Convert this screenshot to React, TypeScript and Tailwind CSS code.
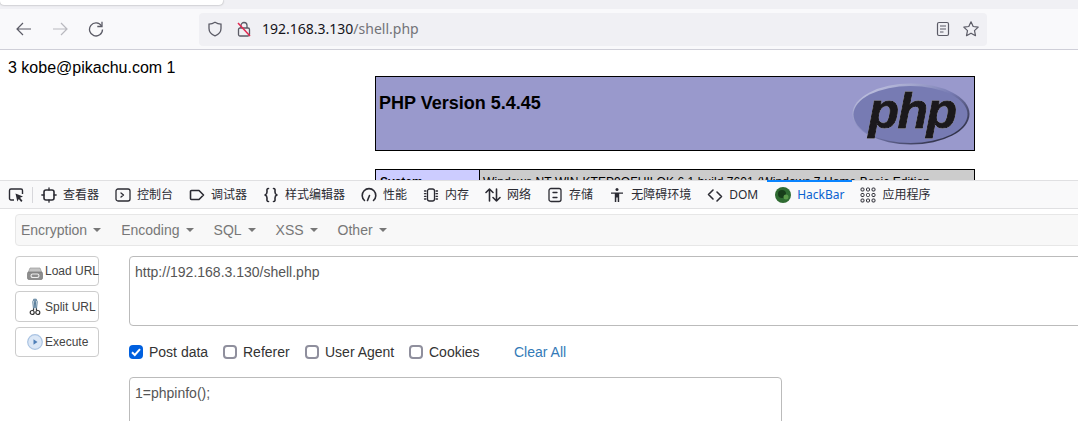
import type { ReactNode } from 'react'

const cjk = 'font-["Noto_Sans","Noto_Sans_CJK_SC",sans-serif]'

function ToolIcon({ children }: { children: ReactNode }) {
  return (
    <svg viewBox="0 0 16 16" fill="none" stroke="#2b2b33" strokeWidth="1.3" strokeLinecap="round" strokeLinejoin="round" className="h-4 w-4 shrink-0">
      {children}
    </svg>
  )
}

const tools: { label: string; icon: ReactNode }[] = [
  {
    label: '查看器',
    icon: (
      <>
        <rect x="3" y="3" width="10" height="10" rx="2" strokeWidth="1.6" />
        <path d="M8 .8V3M8 13v2.2M.8 8H3M13 8h2.2" />
      </>
    ),
  },
  {
    label: '控制台',
    icon: (
      <>
        <rect x="1" y="2" width="14" height="12" rx="2" />
        <path d="M6 6l2.5 2L6 10" />
      </>
    ),
  },
  {
    label: '调试器',
    icon: <path d="M2.5 3.5h7.5L14.5 8 10 12.5H2.5a1 1 0 0 1-1-1v-7a1 1 0 0 1 1-1z" strokeWidth="1.6" />,
  },
  {
    label: '样式编辑器',
    icon: (
      <path
        d="M5.5 1.5C3.5 1.5 4 3 4 5S3.8 7.4 2 8c1.800.6 2 1 2 3s-.5 3.500 1.500 3.500M10.500 1.500c2 0 1.500 1.500 1.500 3.500s.2 2.400 2 3c-1.800.6-2 1-2 3s.5 3.500-1.500 3.500"
        strokeWidth="1.6"
      />
    ),
  },
  {
    label: '性能',
    icon: (
      <>
        <path d="M3.500 13.500A6.800 6.800 0 1 1 12.500 13.500" strokeWidth="1.600" />
        <path d="M6.500 13.500L8.500 8.500" strokeWidth="1.600" />
      </>
    ),
  },
  {
    label: '内存',
    icon: (
      <>
        <rect x="4.500" y="2" width="7" height="12" rx="2" />
        <path d="M1.500 4h1.500M1.500 6.700h1.500M1.500 9.300h1.500M1.500 12h1.500M13 4h1.500M13 6.700h1.500M13 9.300h1.500M13 12h1.500" />
      </>
    ),
  },
  {
    label: '网络',
    icon: <path d="M4.500 14V2M1 5.500L4.500 2 8 5.500M11.500 2v12M8 10.500L11.500 14 15 10.500" strokeWidth="1.600" />,
  },
  {
    label: '存储',
    icon: (
      <>
        <rect x="2" y="1.500" width="12" height="13" rx="2" />
        <path d="M6 5.500h4M6 10.500h4" />
      </>
    ),
  },
  {
    label: '无障碍环境',
    icon: (
      <>
        <circle cx="8" cy="2.500" r="1.500" fill="#2b2b33" stroke="none" />
        <path d="M2 5.500h12v1.300H10.200V15H8.700v-4.500H7.300V15H5.800V6.800H2z" fill="#2b2b33" stroke="none" />
      </>
    ),
  },
  {
    label: 'DOM',
    icon: <path d="M6 3L1.500 7.500 6 12M10 5l4.500 4.500L10 14" strokeWidth="1.600" />,
  },
]

function PhpLogo() {
  return (
    <svg viewBox="0 0 118 62" className="h-[62px] w-[118px]">
      <defs>
        <linearGradient id="rim" x1="0" y1="0" x2="1" y2="1">
          <stop offset="0" stopColor="#d4d6ec" />
          <stop offset="0.5" stopColor="#777bb3" />
          <stop offset="1" stopColor="#14141c" />
        </linearGradient>
      </defs>
      <ellipse cx="59" cy="31" rx="58.500" ry="30.500" fill="url(#rim)" />
      <ellipse cx="58.500" cy="31.500" rx="57" ry="28.500" fill="#777bb3" />
      <text
        x="60"
        y="45"
        textAnchor="middle"
        fontFamily="Liberation Sans, sans-serif"
        fontSize="50"
        fontWeight="700"
        fontStyle="italic"
        letterSpacing="-1.500"
        fill="#1b191c"
        stroke="#1b191c"
        strokeWidth="1"
        className="drop-shadow-[0_0_0.7px_#ffffff]"
      >
        php
      </text>
    </svg>
  )
}

function LoadIcon() {
  return (
    <svg viewBox="0 0 16 16" className="h-4 w-4 shrink-0">
      <path d="M3 3h10l2 5H1z" fill="#c4c4c4" stroke="#9a9a9a" strokeWidth="0.700" />
      <rect x="0.500" y="7" width="15" height="7.500" rx="1.500" fill="#8d8d8d" stroke="#777" strokeWidth="0.700" />
      <rect x="4" y="9" width="8" height="3.500" rx="1.700" fill="none" stroke="#eeeeee" strokeWidth="1.100" />
    </svg>
  )
}

function ScissorsIcon() {
  return (
    <svg viewBox="0 0 12 18" fill="none" className="h-[18px] w-3 shrink-0">
      <path d="M4.500 11L3.800 3.500 5.200.8 5.800 10M7.500 11L8.200 3.500 6.800.8 6.200 10" stroke="#5a7f9c" strokeWidth="1" />
      <circle cx="3.200" cy="14.500" r="2" stroke="#333" strokeWidth="1.200" />
      <circle cx="8.800" cy="14.500" r="2" stroke="#333" strokeWidth="1.200" />
      <path d="M4 12.700L5 10.500M8 12.700L7 10.500" stroke="#333" strokeWidth="1.200" />
    </svg>
  )
}

function PlayIcon() {
  return (
    <svg viewBox="0 0 16 16" className="h-4 w-4 shrink-0">
      <circle cx="8" cy="8" r="7.300" fill="#dbe7f6" stroke="#a9c3e2" strokeWidth="1.200" />
      <path d="M6.500 5.200L10.500 8l-4 2.800z" fill="#4f7fb8" />
    </svg>
  )
}

function SideButton({ icon, label, height, iconBox }: { icon: ReactNode; label: string; height: string; iconBox: string }) {
  return (
    <button type="button" className={`flex w-[84px] items-center rounded border border-[#cccccc] bg-white pl-[9px] text-left ${height}`}>
      <span className={`flex w-5 shrink-0 justify-center ${iconBox}`}>{icon}</span>
      <span className="whitespace-nowrap text-xs text-[#444444]">{label}</span>
    </button>
  )
}

function Check({ label, checked, className }: { label: string; checked?: boolean; className: string }) {
  return (
    <label className={`flex items-center gap-[6px] text-sm text-[#333333] ${className}`}>
      {checked ? (
        <span className="flex h-[14px] w-[14px] items-center justify-center rounded-sm bg-[#0060df]">
          <svg viewBox="0 0 14 14" fill="none" stroke="#fff" strokeWidth="2" className="h-[14px] w-[14px]">
            <path d="M3 7.200L5.800 10 11 4.200" />
          </svg>
        </span>
      ) : (
        <span className="h-[14px] w-[14px] rounded-sm border-2 border-[#8f8f9d] bg-white" />
      )}
      {label}
    </label>
  )
}

export default function App() {
  return (
    <div className='flex h-[421px] w-[1078px] flex-col overflow-hidden bg-white font-["Liberation_Sans",sans-serif]'>
      {/* browser tab strip */}
      <div className="h-[9px] shrink-0 bg-[#f0f0f4]">
        <div className="h-[5px] w-[223px] rounded-b bg-white shadow-[0_0_2px_rgba(0,0,0,0.4)]" />
      </div>

      {/* nav bar */}
      <div className="flex h-[41px] shrink-0 items-center border-b border-[#cfcfd8] bg-[#f9f9fb] pl-[6px]">
        <div className="flex w-9 justify-center">
          <svg viewBox="0 0 16 16" fill="none" stroke="#5b5b66" strokeWidth="1.200" className="h-4 w-4">
            <path d="M15 8H1M7 2L1 8l6 6" />
          </svg>
        </div>
        <div className="flex w-9 justify-center">
          <svg viewBox="0 0 16 16" fill="none" stroke="#b9b9bf" strokeWidth="1.200" className="h-4 w-4">
            <path d="M1 8h14M9 2l6 6-6 6" />
          </svg>
        </div>
        <div className="flex w-9 justify-center">
          <svg viewBox="0 0 16 16" fill="none" stroke="#5b5b66" strokeWidth="1.300" className="h-4 w-4">
            <path d="M13.500 5A6.500 6.500 0 1 0 14.500 8.500" />
            <path d="M14 .8V5.500H9.300" />
          </svg>
        </div>
        <div className={`ml-[85px] flex h-[33px] w-[788px] items-center rounded bg-[#f0f0f4] pl-[8px] pr-2 text-sm ${cjk}`}>
          <svg viewBox="0 0 16 16" fill="none" stroke="#5b5b66" strokeWidth="1.300" className="h-4 w-4 shrink-0">
            <path d="M8 1.200c2 1.200 4 1.800 6 2v4.300c0 3.500-2.500 6-6 7.300-3.500-1.300-6-3.800-6-7.300V3.200c2-.2 4-.8 6-2z" />
          </svg>
          <svg viewBox="0 0 16 16" fill="none" className="ml-[13px] h-4 w-4 shrink-0">
            <path d="M5 7V4.500a3 3 0 0 1 6 0V7" stroke="#5b5b66" strokeWidth="1.300" />
            <rect x="2.500" y="7" width="11" height="8" rx="1.500" stroke="#5b5b66" strokeWidth="1.300" />
            <path d="M2 2l12 13" stroke="#e22850" strokeWidth="1.500" />
          </svg>
          <span className="ml-[10px] whitespace-nowrap text-[#15141a]">
            192.168.3.130<span className="text-[#737378]">/shell.php</span>
          </span>
          <svg viewBox="0 0 16 16" fill="none" stroke="#5b5b66" strokeWidth="1.200" className="ml-auto h-4 w-4 shrink-0">
            <rect x="2.500" y="1.500" width="11" height="13" rx="1.500" />
            <path d="M5 5h6M5 8h6M5 11h3.500" />
          </svg>
          <svg viewBox="0 0 16 16" fill="none" stroke="#5b5b66" strokeWidth="1.200" strokeLinejoin="round" className="ml-3 h-4 w-4 shrink-0">
            <path d="M8 .8l2.200 4.700 5 .6-3.700 3.500 1 5.100L8 12.200l-4.500 2.500 1-5.100L.8 6.100l5-.6z" />
          </svg>
        </div>
      </div>

      {/* page */}
      <div className="h-[130px] shrink-0 overflow-hidden bg-white px-2 pt-[10px] text-black">
        <p className="text-base leading-4">3 kobe@pikachu.com 1</p>
        <div className="ml-[367px] flex h-[75px] w-[600px] justify-between border border-black bg-[#9999cc] pl-[3px] pr-[4px]">
          <h1 className="mt-[16px] text-lg font-bold leading-5">PHP Version 5.4.45</h1>
          <div className="mt-[6px]">
            <PhpLogo />
          </div>
        </div>
        <div className="ml-[367px] mt-[18px] flex h-[40px] w-[600px] border border-black text-xs">
          <div className="w-[104px] border-r border-black bg-[#ccccff] pl-[4px] pt-[4px] font-bold">System</div>
          <div className="flex-1 whitespace-nowrap bg-[#cccccc] pl-[3px] pt-[4px] tracking-[0.07px]">Windows NT WIN-KTEP9QFUILOK 6.1 build 7601 (Windows 7 Home Basic Edition</div>
        </div>
      </div>

      {/* devtools toolbar */}
      <div className={`flex h-[29px] shrink-0 items-center border-y border-[#e0e0e2] bg-[#f9f9fa] pl-2 text-xs text-[#2b2b33] ${cjk}`}>
        <svg viewBox="0 0 16 16" fill="none" stroke="#2b2b33" strokeWidth="1.400" className="h-4 w-4 shrink-0">
          <path d="M6 13H3a1.500 1.500 0 0 1-1.500-1.500v-8A1.500 1.500 0 0 1 3 2h10a1.500 1.500 0 0 1 1.500 1.500V7" />
          <path d="M7.500 6.500l7.500 3-3 1.200 2.500 3-1.300 1.200-2.400-3-1.500 2.500z" fill="#2b2b33" stroke="none" />
        </svg>
        <div className="ml-2 h-4 w-px bg-[#d7d7db]" />
        {tools.map((tool) => (
          <div key={tool.label} className="flex shrink-0 items-center gap-[6px] px-2 whitespace-nowrap">
            <ToolIcon>{tool.icon}</ToolIcon>
            <span>{tool.label}</span>
          </div>
        ))}
        <div className="relative ml-[1px] flex h-full shrink-0 items-center gap-[6px] px-2 whitespace-nowrap text-[#0a62d0]">
          <span className="absolute inset-x-0 top-[-1px] h-[2px] bg-[#0a84ff]" />
          <svg viewBox="0 0 16 16" className="h-4 w-4 shrink-0">
            <circle cx="8" cy="8" r="8" fill="#2f6b32" />
            <circle cx="7" cy="7" r="4" fill="#173d1a" />
            <circle cx="11" cy="10" r="2.500" fill="#5a9a4a" />
          </svg>
          <span>HackBar</span>
        </div>
        <div className="flex shrink-0 items-center gap-[6px] px-2 whitespace-nowrap">
          <svg viewBox="0 0 16 16" fill="none" stroke="#2b2b33" strokeWidth="1" className="h-4 w-4 shrink-0">
            <rect x="1" y="1" width="3" height="3" rx="1" />
            <rect x="6.500" y="1" width="3" height="3" rx="1" />
            <rect x="12" y="1" width="3" height="3" rx="1" />
            <rect x="1" y="6.500" width="3" height="3" rx="1" />
            <rect x="6.500" y="6.500" width="3" height="3" rx="1" />
            <rect x="12" y="6.500" width="3" height="3" rx="1" />
            <rect x="1" y="12" width="3" height="3" rx="1" />
            <rect x="6.500" y="12" width="3" height="3" rx="1" />
            <rect x="12" y="12" width="3" height="3" rx="1" />
          </svg>
          <span>应用程序</span>
        </div>
      </div>

      {/* hackbar */}
      <div className="flex min-h-0 flex-1 flex-col pl-[15px] pt-[5px]">
        <div className="flex h-8 w-[1100px] shrink-0 items-center rounded border border-[#e7e7e7] bg-[#f8f8f8] pl-[5px] text-sm text-[#777777]">
          {['Encryption', 'Encoding', 'SQL', 'XSS', 'Other'].map((item) => (
            <div key={item} className="mr-[20px] flex items-center gap-[6px]">
              {item}
              <span className="h-0 w-0 border-x-4 border-t-4 border-x-transparent border-t-[#777777]" />
            </div>
          ))}
        </div>

        <div className="mt-[10px] flex gap-[30px]">
          <div className="flex shrink-0 flex-col">
            <SideButton icon={<LoadIcon />} label="Load URL" height="h-[30px]" iconBox="mt-[3px]" />
            <div className="mt-[5px]">
              <SideButton icon={<ScissorsIcon />} label="Split URL" height="h-[31px]" iconBox="" />
            </div>
            <div className="mt-[5px]">
              <SideButton icon={<PlayIcon />} label="Execute" height="h-[30px]" iconBox="" />
            </div>
          </div>

          <div className="flex w-[1000px] shrink-0 flex-col">
            <textarea
              readOnly
              defaultValue="http://192.168.3.130/shell.php"
              className="h-[70px] w-full resize-none rounded border border-[#bbbbbb] p-[5px] text-sm text-[#555555] outline-none"
            />
            <div className="mt-[19px] flex h-[14px] items-center whitespace-nowrap">
              <Check label="Post data" checked className="w-[94px]" />
              <Check label="Referer" className="w-[82px]" />
              <Check label="User Agent" className="w-[104px]" />
              <Check label="Cookies" className="w-[105px]" />
              <span className="text-sm text-[#337ab7]">Clear All</span>
            </div>
            <textarea
              readOnly
              defaultValue="1=phpinfo();"
              className="mt-[18px] h-[80px] w-[653px] shrink-0 resize-none rounded border border-[#bbbbbb] p-[5px] text-sm text-[#555555] outline-none"
            />
          </div>
        </div>
      </div>
    </div>
  )
}
